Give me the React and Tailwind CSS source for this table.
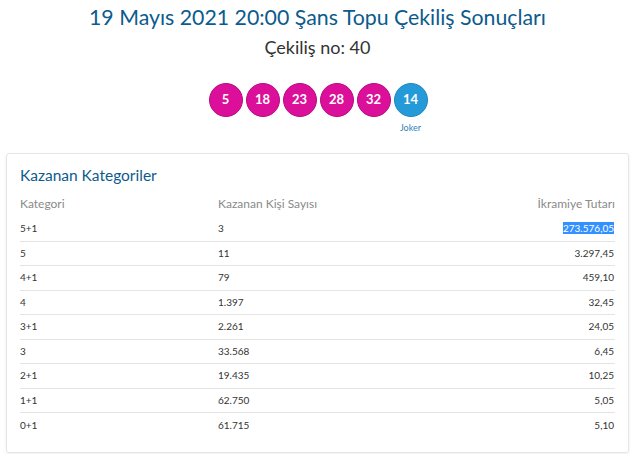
import React from 'react';

const balls = ['5', '18', '23', '28', '32'];

const rows = [
    ['5+1', '3', '273.576,05'],
    ['5', '11', '3.297,45'],
    ['4+1', '79', '459,10'],
    ['4', '1.397', '32,45'],
    ['3+1', '2.261', '24,05'],
    ['3', '33.568', '6,45'],
    ['2+1', '19.435', '10,25'],
    ['1+1', '62.750', '5,05'],
    ['0+1', '61.715', '5,10'],
];

const Ball = ({ n, joker }) => (
    <div
        className={`w-[34px] h-[34px] rounded-full flex items-center justify-center text-white text-[13px] font-bold border ${
            joker ? 'bg-[#259ad8] border-[#1f88c2]' : 'bg-[#dc0f9b] border-[#b80c81]'
        }`}
    >
        {n}
    </div>
);

export default function App() {
    return (
        <div className="w-[635px] h-[454px] bg-white overflow-hidden font-['Lato',sans-serif]">
            <h1 className="text-center text-[21.3px] leading-[26px] pt-[4px] text-[#0c5b8d]">
                19 Mayıs 2021 20:00 Şans Topu Çekiliş Sonuçları
            </h1>
            <p className="text-center text-[18px] leading-[22px] mt-[6px] text-[#333]">Çekiliş no: 40</p>

            <div className="flex justify-center gap-[3px] mt-[25px] pl-[1px]">
                {balls.map((b) => (
                    <div key={b} className="flex flex-col items-center w-[34px]">
                        <Ball n={b} />
                    </div>
                ))}
                <div className="flex flex-col items-center w-[34px] relative">
                    <Ball n="14" joker />
                    <span className="absolute top-[38px] text-[9px] text-[#2f7fb8]">Joker</span>
                </div>
            </div>

            <div className="mx-[6px] mt-[36px] border border-[#e6e6e6] rounded-[3px] shadow-[0_1px_3px_rgba(0,0,0,0.08)] px-[13px] pt-[11px] h-[300px]">
                <h2 className="text-[15.5px] leading-[20px] text-[#0c5b8d]">Kazanan Kategoriler</h2>
                <div className="grid grid-cols-[198px_1fr_1fr] text-[12px] text-[#8a8a8a] mt-[7px] h-[24px] items-center">
                    <span>Kategori</span>
                    <span>Kazanan Kişi Sayısı</span>
                    <span className="text-right">İkramiye Tutarı</span>
                </div>
                <div className="mt-[1px]">
                    {rows.map((r, i) => (
                        <div
                            key={r[0]}
                            className={`grid grid-cols-[198px_1fr_1fr] items-center h-[24.5px] text-[10px] text-[#333] ${
                                i < rows.length - 1 ? 'border-b border-[#e4e4e4]' : ''
                            }`}
                        >
                            <span>{r[0]}</span>
                            <span>{r[1]}</span>
                            <span className="text-right pr-[1px]">
                                {i === 0 ? (
                                    <span className="bg-[#3390ff] text-white">{r[2]}</span>
                                ) : (
                                    r[2]
                                )}
                            </span>
                        </div>
                    ))}
                </div>
            </div>
        </div>
    );
}
